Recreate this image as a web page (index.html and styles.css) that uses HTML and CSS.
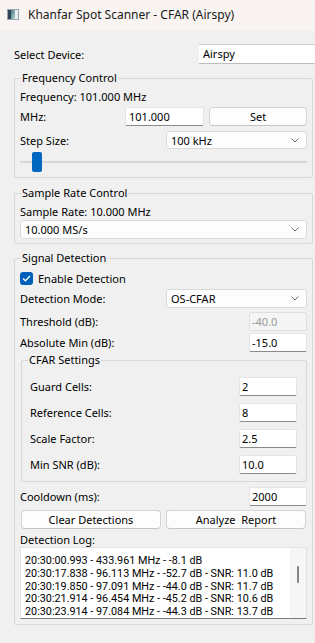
FILE: index.html
```html
<!DOCTYPE html>
<html>
<head>
<meta charset="utf-8">
<title>Khanfar Spot Scanner - CFAR (Airspy)</title>
<link rel="stylesheet" href="styles.css">
</head>
<body>
<div class="titlebar">
  <svg class="app-icon" width="12" height="11" viewBox="0 0 12 11">
    <defs>
      <linearGradient id="ig" x1="0" y1="0" x2="1" y2="1">
        <stop offset="0" stop-color="#3f7a80"/>
        <stop offset="1" stop-color="#b9d2d4"/>
      </linearGradient>
    </defs>
    <rect x="0.5" y="0.5" width="11" height="10" fill="#e9eef0" stroke="#9aa6ad"/>
    <rect x="1" y="1" width="3" height="9" fill="#2e4558"/>
    <rect x="4" y="1" width="4" height="9" fill="url(#ig)"/>
  </svg>
  <span class="title">Khanfar Spot Scanner - CFAR (Airspy)</span>
</div>

<main class="content">
  <div class="row device-row">
    <span class="lbl">Select Device:</span>
    <div class="device-combo">Airspy</div>
  </div>

  <section class="group freq-group">
    <div class="group-title">Frequency Control</div>
    <div class="label-line freq-line">Frequency: 101.000 MHz</div>
    <div class="row mhz-row">
      <span class="lbl">MHz:</span>
      <div class="edit mhz-edit">101.000</div>
      <div class="btn set-btn">Set</div>
    </div>
    <div class="row step-row">
      <span class="lbl">Step Size:</span>
      <div class="combo half-combo"><span class="combo-text">100 kHz</span><svg class="chev" width="8" height="5" viewBox="0 0 8 5"><path d="M0.5 0.5 L4 4 L7.5 0.5" fill="none" stroke="#6b6b6b" stroke-width="1"/></svg></div>
    </div>
    <div class="slider"><div class="handle"></div></div>
  </section>

  <section class="group rate-group">
    <div class="group-title">Sample Rate Control</div>
    <div class="label-line rate-line">Sample Rate: 10.000 MHz</div>
    <div class="combo full-combo"><span class="combo-text">10.000 MS/s</span><svg class="chev" width="8" height="5" viewBox="0 0 8 5"><path d="M0.5 0.5 L4 4 L7.5 0.5" fill="none" stroke="#6b6b6b" stroke-width="1"/></svg></div>
  </section>

  <section class="group detect-group">
    <div class="group-title">Signal Detection</div>
    <div class="row check-row">
      <span class="checkbox"><svg width="9" height="7" viewBox="0 0 9 7"><path d="M1 3.6 L3.4 5.8 L8 1" fill="none" stroke="#ffffff" stroke-width="1.3"/></svg></span>
      <span class="check-label">Enable Detection</span>
    </div>
    <div class="row mode-row">
      <span class="lbl">Detection Mode:</span>
      <div class="combo half-combo"><span class="combo-text">OS-CFAR</span><svg class="chev" width="8" height="5" viewBox="0 0 8 5"><path d="M0.5 0.5 L4 4 L7.5 0.5" fill="none" stroke="#6b6b6b" stroke-width="1"/></svg></div>
    </div>
    <div class="row thr-row">
      <span class="lbl">Threshold (dB):</span>
      <div class="edit num-edit disabled">-40.0</div>
    </div>
    <div class="row abs-row">
      <span class="lbl">Absolute Min (dB):</span>
      <div class="edit num-edit">-15.0</div>
    </div>

    <section class="group cfar-group">
      <div class="group-title">CFAR Settings</div>
      <div class="row cfar-row first">
        <span class="lbl">Guard Cells:</span>
        <div class="edit num-edit">2</div>
      </div>
      <div class="row cfar-row">
        <span class="lbl">Reference Cells:</span>
        <div class="edit num-edit">8</div>
      </div>
      <div class="row cfar-row">
        <span class="lbl">Scale Factor:</span>
        <div class="edit num-edit">2.5</div>
      </div>
      <div class="row cfar-row">
        <span class="lbl">Min SNR (dB):</span>
        <div class="edit num-edit">10.0</div>
      </div>
    </section>

    <div class="row cool-row">
      <span class="lbl">Cooldown (ms):</span>
      <div class="edit num-edit">2000</div>
    </div>
    <div class="row btn-row">
      <div class="btn">Clear Detections</div>
      <div class="btn">Analyze&nbsp; Report</div>
    </div>
    <div class="label-line log-label">Detection Log:</div>
    <div class="log">
      <div class="log-text">
        <div>20:30:00.993 - 433.961 MHz - -8.1 dB</div>
        <div>20:30:17.838 - 96.113 MHz - -52.7 dB - SNR: 11.0 dB</div>
        <div>20:30:19.850 - 97.091 MHz - -44.0 dB - SNR: 11.7 dB</div>
        <div>20:30:21.914 - 96.454 MHz - -45.2 dB - SNR: 10.6 dB</div>
        <div>20:30:23.914 - 97.084 MHz - -44.3 dB - SNR: 13.7 dB</div>
      </div>
      <div class="log-scroll"><div class="thumb"></div></div>
    </div>
  </section>
</main>
</body>
</html>
```

FILE: styles.css
```css
* { box-sizing: border-box; }
html, body { margin: 0; padding: 0; }
body {
  width: 315px;
  height: 643px;
  overflow: hidden;
  background: #f0f0f0;
  font-family: "Noto Sans", "Segoe UI", sans-serif;
  font-size: 11px;
  color: #000;
}

.titlebar {
  height: 30px;
  background: #f9f4f1;
  display: flex;
  align-items: center;
  padding: 0 0 2px 7px;
}
.app-icon { margin-right: 9px; flex: none; }
.title { font-size: 12px; color: #1a1a1a; white-space: nowrap; }

.content { padding: 14px 2px 0 14px; }

.row { display: flex; align-items: center; }
.lbl { flex: 1; white-space: nowrap; }

.device-row { height: 20px; }
.device-combo {
  width: 116px;
  height: 20px;
  margin-right: -2px;
  background: #fff;
  border-top: 1px solid #d0d0d0;
  border-bottom: 1px solid #bdbdbd;
  padding-left: 4px;
  line-height: 18px;
}

.group {
  border: 1px solid #d8d8d8;
  border-radius: 2px;
  padding: 0 5px;
}
.group-title {
  width: max-content;
  margin: -9px 0 0 1px;
  padding: 0 1px;
  line-height: 16px;
  background: #f0f0f0;
  white-space: nowrap;
}
.label-line { line-height: 16px; white-space: nowrap; }

.freq-group { margin-top: 14px; padding-bottom: 5px; }
.freq-line { margin-top: 3px; }
.mhz-row { margin-top: 2px; height: 19px; }
.step-row { margin-top: 5px; height: 18px; }

.edit {
  height: 19px;
  background: #fff;
  border: 1px solid #e4e4e4;
  border-bottom-color: #8a8a8a;
  border-radius: 2px;
  padding-left: 2px;
  line-height: 17px;
  white-space: nowrap;
}
.mhz-edit { width: 79px; margin-right: 5px; padding-left: 3px; }
.num-edit { width: 58px; }
.edit.disabled {
  background: #f5f5f5;
  border-color: #e0e0e0;
  color: #9a9a9a;
}

.btn {
  height: 19px;
  background: #fdfdfd;
  border: 1px solid #d3d3d3;
  border-bottom-color: #c4c4c4;
  border-radius: 4px;
  text-align: center;
  line-height: 17px;
  white-space: nowrap;
}
.set-btn { width: 98px; }

.combo {
  height: 18px;
  background: #fdfdfd;
  border: 1px solid #dadada;
  border-radius: 3px;
  display: flex;
  align-items: center;
  padding-left: 4px;
}
.combo-text { flex: 1; white-space: nowrap; }
.chev { margin-right: 7px; flex: none; }
.half-combo { width: 141px; }
.full-combo { height: 19px; }

.slider {
  margin-top: 3px;
  height: 20px;
  background: linear-gradient(to bottom, transparent 9px, #d2d2d2 9px, #dcdcdc 11px, transparent 11px);
}
.handle {
  width: 10px;
  height: 20px;
  margin-left: 12px;
  background: #0067c0;
  border-radius: 2px;
}

.rate-group { margin-top: 15px; padding-bottom: 4px; }
.rate-line { margin-top: 3px; }

.detect-group { margin-top: 14px; padding-bottom: 5px; }
.check-row { margin-top: 4px; height: 16px; }
.checkbox {
  width: 13px;
  height: 13px;
  border-radius: 3px;
  background: #005fb8;
  display: flex;
  align-items: center;
  justify-content: center;
  margin-right: 5px;
}
.mode-row { margin-top: 3px; height: 19px; }
.mode-row .combo { height: 19px; }
.thr-row { margin-top: 4px; }
.abs-row { margin-top: 2px; }

.cfar-group {
  margin: 8px 0 0 1px;
  padding: 0 9px 7px 8px;
}
.cfar-group .group-title { margin-left: -2px; }
.cfar-row { margin-top: 7px; }
.cfar-row.first { margin-top: 9px; }

.cool-row { margin-top: 5px; }
.btn-row { margin-top: 4px; gap: 5px; padding: 0 1px; }
.btn-row .btn { flex: 1; }

.log-label { margin-top: 3px; line-height: 15px; }

.log {
  height: 72px;
  display: flex;
  border: 1px solid #e2e2e2;
  border-bottom: 1px solid #7d7d7d;
  background: #fff;
  overflow: hidden;
}
.log-text {
  flex: 1;
  padding: 7px 0 0 4px;
  font-family: Roboto, "Noto Sans", sans-serif;
  font-size: 10.8px;
  line-height: 12.8px;
  white-space: nowrap;
  overflow: hidden;
}
.log-scroll {
  width: 16px;
  background: #f6f6f6;
  flex: none;
}
.thumb {
  width: 2px;
  height: 17px;
  margin: 18px 0 0 7px;
  background: #858585;
  border-radius: 1px;
}
```
